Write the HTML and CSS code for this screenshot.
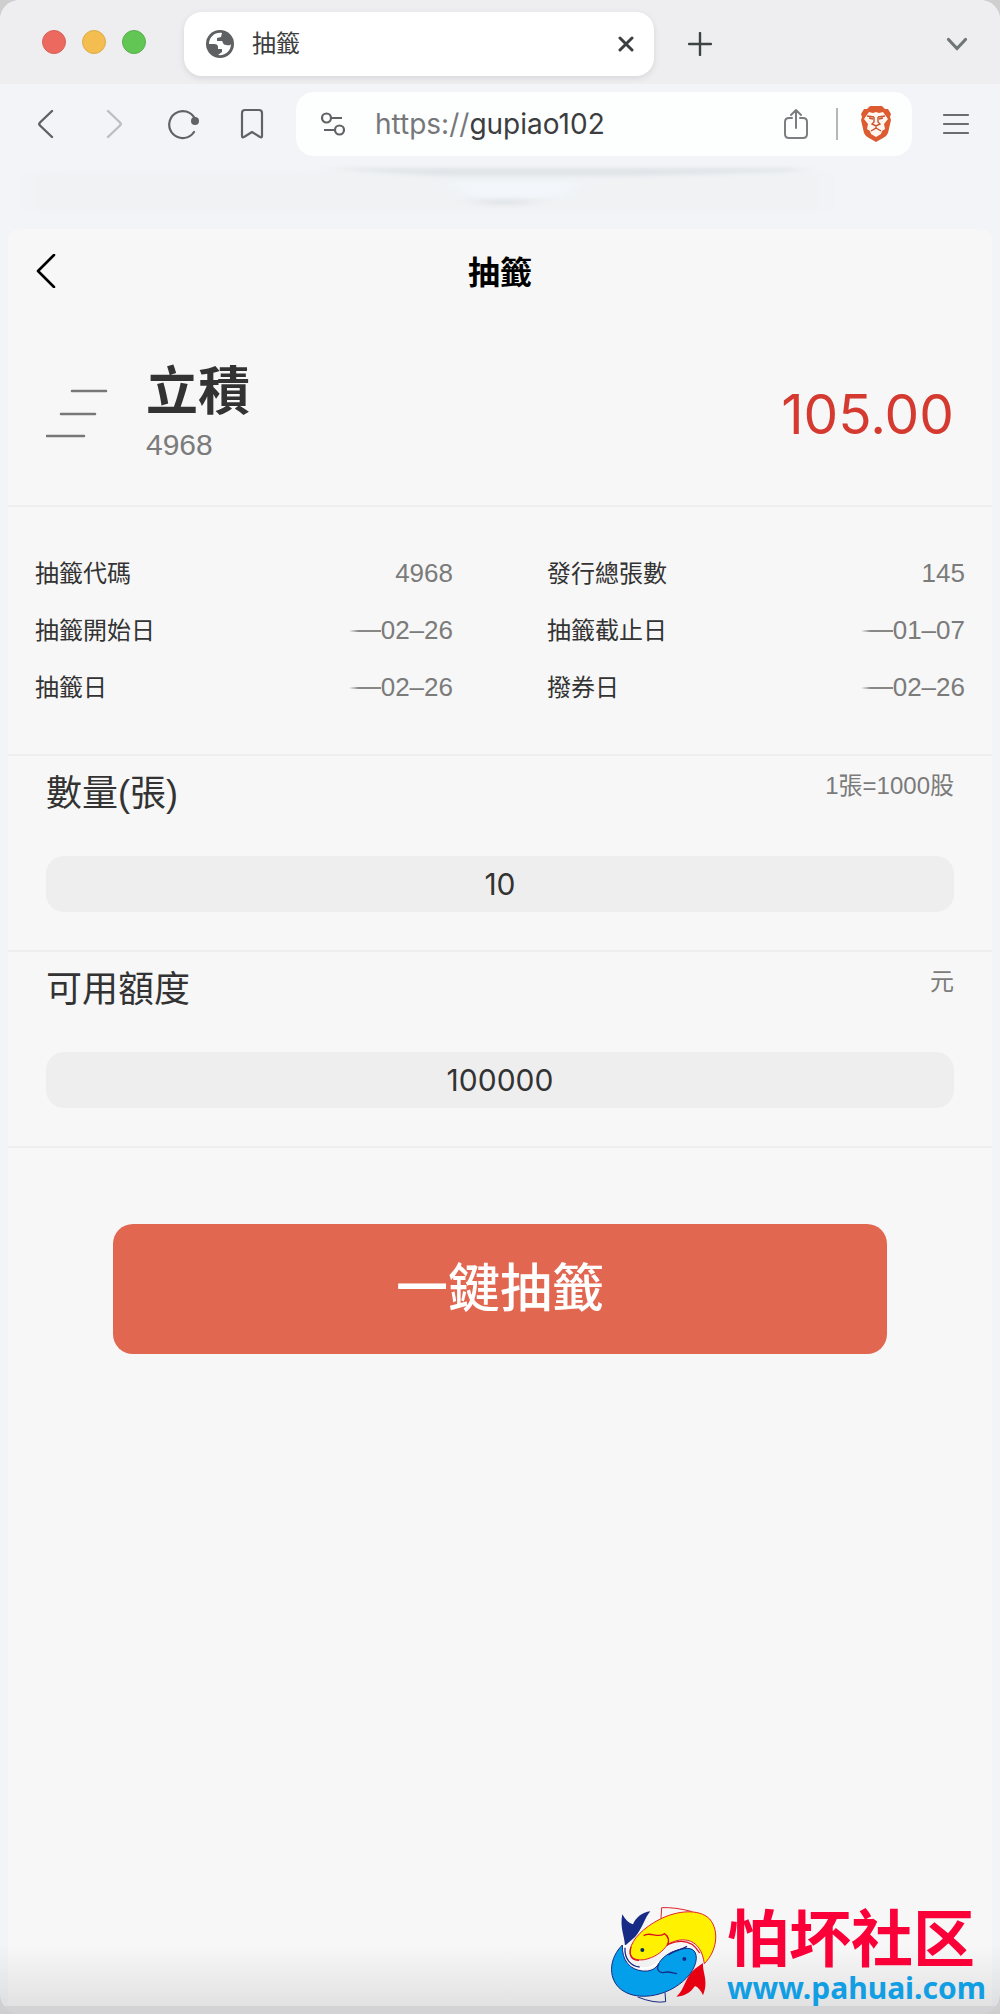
FILE: index.html
```html
<!DOCTYPE html>
<html lang="zh-Hant">
<head>
  <meta charset="UTF-8" />
  <meta name="viewport" content="width=device-width, initial-scale=1.0">
  <title>抽籤</title>
  <link rel="stylesheet" href="styles.css">
</head>
<body>

  <div class="window">

    <div class="tab-strip">
      <div class="lights">
        <span class="light red"></span>
        <span class="light yellow"></span>
        <span class="light green"></span>
      </div>
      <div class="tab">
        <svg width="28" height="28" viewBox="0 0 28 28">
          <circle cx="14" cy="14" r="14" fill="#5f6063"/>
          <path d="M16 3C9 2 3 7 3 14h5q4 0 4 3v2h4v3l-4 3c7 1 13-4 13-11-1 2-3 1-5 1-3 0-3-3-4-4l-5 0v-3l4-1z" fill="#fff"/>
        </svg>
        <span class="tab-title">抽籤</span>
        <button class="icon-btn tab-close" aria-label="關閉">
          <svg width="16" height="16" viewBox="0 0 16 16" fill="none" stroke="#3c3e40" stroke-width="3" stroke-linecap="round"><path d="M2 2l12 12M14 2L2 14"/></svg>
        </button>
      </div>
      <button class="icon-btn" aria-label="新分頁">
        <svg width="24" height="24" viewBox="0 0 24 24" fill="none" stroke="#3f4244" stroke-width="2.4" stroke-linecap="round"><path d="M12 1v22M1 12h22"/></svg>
      </button>
      <button class="icon-btn tab-list" aria-label="分頁清單">
        <svg width="22" height="14" viewBox="0 0 22 14" fill="none" stroke="#707577" stroke-width="3.2" stroke-linecap="round"><path d="M2.5 2.5L11 11.5l8.500-9"/></svg>
      </button>
    </div>

    <div class="toolbar">
      <div class="nav">
        <button class="icon-btn" aria-label="返回">
          <svg width="28" height="28" viewBox="0 0 28 28" fill="none" stroke="#5f6264" stroke-width="2.4" stroke-linecap="round" stroke-linejoin="round"><path d="M20 1L8 12.500q-1.500 1.500 0 3L20 27"/></svg>
        </button>
        <button class="icon-btn" aria-label="前進">
          <svg width="28" height="28" viewBox="0 0 28 28" fill="none" stroke="#bcbec1" stroke-width="2.400" stroke-linecap="round" stroke-linejoin="round"><path d="M8 1l12 11.500q1.500 1.500 0 3L8 27"/></svg>
        </button>
        <button class="icon-btn" aria-label="重新載入">
          <svg width="32" height="32" viewBox="0 0 32 32" fill="none" stroke="#606365" stroke-width="2.200" stroke-linecap="round"><path d="M27 11A13.500 13.500 0 1 0 26 24"/><circle cx="27" cy="13" r="4" fill="#606365" stroke="none"/></svg>
        </button>
        <button class="icon-btn" aria-label="書籤">
          <svg width="24" height="32" viewBox="0 0 24 32" fill="none" stroke="#606365" stroke-width="2.200" stroke-linejoin="round"><path d="M5 2h14q3 0 3 3v23q0 2-2 1l-8-5-8 5q-2 1-2-1V5q0-3 3-3z"/></svg>
        </button>
      </div>
      <div class="address">
        <svg width="26" height="24" viewBox="0 0 26 24" fill="none" stroke="#606365" stroke-width="2.200"><circle cx="6.500" cy="6" r="4.500"/><path d="M11 6h11M4 18h11"/><circle cx="19.500" cy="18" r="4.500"/></svg>
        <label class="scheme" for="url">https://</label>
        <input class="url" id="url" type="text" value="gupiao102">
        <button class="icon-btn" aria-label="分享">
          <svg width="24" height="32" viewBox="0 0 24 32" fill="none" stroke="#7b7e80" stroke-width="2" stroke-linecap="round" stroke-linejoin="round"><path d="M8 10H5q-4 0-4 4v12q0 4 4 4h14q4 0 4-4V14q0-4-4-4h-3M12 20V2M7 7l5-5 5 5"/></svg>
        </button>
        <span class="divider"></span>
        <button class="icon-btn" aria-label="Brave">
          <svg width="32" height="36" viewBox="0 0 32 36">
            <path d="M10 0h12l3 3h3l3 5-1 3 1 3-3 13q-1 3-5 5l-7 4-7-4q-4-2-5-5L1 14l1-3-1-3 3-5h3z" fill="#dc5b30"/>
            <path d="M9 6l4 1 3-1 3 1 4-1 5 7-4 5 1 5-3 2-1 3-5 3-5-3-1-3-3-2 1-5-4-5z" fill="#fff6f0"/>
            <path d="M7 10l7 1M25 10l-7 1M9 12l4 1M23 12l-4 1M14 11v5l-2 2 4 2 4-2-2-2v-5M16 20v2l-5 3M16 22l5 3" fill="none" stroke="#c9532d" stroke-width="1.400"/>
          </svg>
        </button>
      </div>
      <button class="icon-btn menu" aria-label="選單">
        <svg width="28" height="22" viewBox="0 0 28 22" fill="none" stroke="#696d6f" stroke-width="2.200" stroke-linecap="round"><path d="M2 2h24M2 11h24M2 20h24"/></svg>
      </button>
    </div>

    <div class="smudge">
      <svg width="100%" height="100%" viewBox="0 0 1000 66" preserveAspectRatio="none">
        <defs>
          <filter id="soft" x="-10%" y="-50%" width="120%" height="200%"><feGaussianBlur stdDeviation="12 2"/></filter>
        </defs>
        <g filter="url(#soft)">
          <rect x="30" y="8" width="795" height="40" fill="#f0f2f4"/>
          <path d="M320 4h480v3l-160 5H440z" fill="#dfe4e7"/>
          <path d="M450 18h130l-20 16H470z" fill="#f3f7fb"/>
          <path d="M470 36h70l-20 6h-30z" fill="#e0e3e7"/>
        </g>
      </svg>
    </div>

    <main class="page">
      <header class="page-head">
        <button class="icon-btn" aria-label="返回">
          <svg width="20" height="34" viewBox="0 0 20 34" fill="none" stroke="#000" stroke-width="2.600" stroke-linecap="round" stroke-linejoin="round"><path d="M18 1L2 17l16 16"/></svg>
        </button>
        <h1>抽籤</h1>
      </header>

      <section class="stock">
        <svg width="62" height="50" viewBox="0 0 62 50" fill="none" stroke="#777" stroke-width="2.600" stroke-linecap="round"><path d="M26 2h34M15 25h34M1 47h37"/></svg>
        <div class="stock-name">
          <h2>立積</h2>
          <p>4968</p>
        </div>
        <strong class="price">105.00</strong>
      </section>

      <dl class="details">
        <div><dt>抽籤代碼</dt><dd>4968</dd></div>
        <div><dt>發行總張數</dt><dd>145</dd></div>
        <div><dt>抽籤開始日</dt><dd><i class="strike"></i>02–26</dd></div>
        <div><dt>抽籤截止日</dt><dd><i class="strike"></i>01–07</dd></div>
        <div><dt>抽籤日</dt><dd><i class="strike"></i>02–26</dd></div>
        <div><dt>撥券日</dt><dd><i class="strike"></i>02–26</dd></div>
      </dl>

      <section class="field">
        <div class="field-head">
          <label for="amount">數量(張)</label>
          <span>1張=1000股</span>
        </div>
        <input id="amount" type="text" value="10">
      </section>

      <section class="field">
        <div class="field-head">
          <label for="quota">可用額度</label>
          <span>元</span>
        </div>
        <input id="quota" type="text" value="100000">
      </section>

      <button class="submit">一鍵抽籤</button>
    </main>

    <div class="watermark">
      <svg width="120" height="119" viewBox="0 0 360 357">
        <!-- tails -->
        <path d="M66 152C64 120 50 98 58 58q14 26 32 30C98 68 118 52 142 49 126 66 118 102 96 126q-14 12-30 26z" fill="#172a85"/>
        <path d="M300 204c-2 30 18 54 0 97-6-14-14-24-24-28-14 20-30 30-56 32 26-22 26-60 56-84z" fill="#e60012"/>
        <!-- fins -->
        <path d="M174 70l2-32q40-2 92 12" fill="none" stroke="#e2222b" stroke-width="3"/>
        <path d="M104 306q50 20 84 14l-2-28" fill="none" stroke="#172a85" stroke-width="3"/>
        <!-- yellow fish -->
        <path d="M304 206C342 168 350 108 320 72 288 40 222 46 168 74 122 98 88 132 82 162c-4 26 14 36 42 32 30-6 54-22 70-46 46-26 100-18 110 58z" fill="#fff100" stroke="#e2222b" stroke-width="3"/>
        <!-- blue fish -->
        <path d="M58 150C20 188 14 244 48 278c36 34 104 34 162 2 42-24 68-58 70-90 0-26-16-34-44-28-30 6-54 20-68 42-10 20-28 26-50 24-36-4-62-30-60-78z" fill="#049fea" stroke="#172a85" stroke-width="3"/>
        <path d="M66 150c-4 40 18 66 50 70 22 2 38-6 50-20" fill="none" stroke="#fff" stroke-width="7"/>
        <path d="M66 158c-2 34 18 56 44 58M168 206c-10 16 0 30 16 26 16-4 24 2 38 4M196 180c20-16 36-14 56-26" fill="none" stroke="#172a85" stroke-width="4"/>
        <path d="M122 122c20-14 42 10 62-6 14 8 16 24 8 36M192 150c40-18 76-14 98 24M84 156c-8 26 2 40 24 40" fill="none" stroke="#d9121e" stroke-width="4"/>
        <circle cx="118" cy="165" r="6" fill="#072c56"/>
        <circle cx="244" cy="192" r="6" fill="#172a85"/>
      </svg>
      <div class="brand">
        <span class="brand-name" lang="zh-Hans">怕坏社区</span>
        <a href="#">www.pahuai.com</a>
      </div>
    </div>

  </div>

</body>
</html>
```
FILE: styles.css
```css
* {
  box-sizing: border-box;
}

html, body {
  margin: 0;
  padding: 0;
  background: #cfcfd0;
  color: #333;
  font-family: 'Liberation Sans', 'Noto Sans CJK TC', sans-serif;
}

h1, h2, p, dl, dd {
  margin: 0;
}

button, input {
  border: 0;
  padding: 0;
  background: none;
  color: inherit;
  font-family: inherit;
}

.window {
  position: relative;
  display: flex;
  flex-direction: column;
  min-height: 100vh;
  padding-bottom: 8px;
  background: linear-gradient(to top, #d3d3d5 8px, #dedfe1 8px, #f3f4f7 70px);
  border-radius: 20px;
  overflow: hidden;
}

.icon-btn {
  display: flex;
  align-items: center;
  justify-content: center;
  flex: none;
}

/* tabs */
.tab-strip {
  display: flex;
  align-items: center;
  height: 84px;
  padding: 4px 32px 0 42px;
  background: #eeeef0;
}

.lights {
  display: flex;
  gap: 16px;
  width: 142px;
  padding-bottom: 4px;
}

.light {
  width: 24px;
  height: 24px;
  border-radius: 50%;
}

.red { background: #ec695f; border: 1px solid #d95f57; }
.yellow { background: #f3be4f; border: 1px solid #d9ab4a; }
.green { background: #62c654; border: 1px solid #58ae4c; }

.tab {
  display: flex;
  align-items: center;
  flex: 0 1 470px;
  height: 64px;
  margin-right: 34px;
  padding: 0 20px 0 22px;
  background: #fff;
  border-radius: 18px;
  box-shadow: 0 2px 6px rgba(0, 0, 0, 0.1);
}

.tab-title {
  margin-left: 18px;
  font-size: 24px;
  line-height: 32px;
  color: #3d3e40;
}

.tab-close,
.tab-list {
  margin-left: auto;
}

/* address bar */
.toolbar {
  display: flex;
  align-items: center;
  height: 80px;
  padding: 0 30px 0 32px;
  background: #f3f4f7;
}

.nav {
  display: flex;
  align-items: center;
  flex: none;
  gap: 40px;
  width: 264px;
}

.address {
  display: flex;
  align-items: center;
  flex: 1;
  min-width: 0;
  height: 64px;
  padding: 0 20px 0 24px;
  background: #fdfffe;
  border-radius: 18px;
}

.scheme,
.url {
  font-family: Inter, sans-serif;
  font-size: 28px;
}

.scheme {
  margin-left: 29px;
  color: #76777a;
}

.url {
  flex: 1;
  min-width: 0;
  color: #3c3d40;
}

.divider {
  width: 2px;
  height: 32px;
  margin: 0 22px 0 28px;
  background: #b5b7b9;
}

.menu {
  margin-left: 30px;
}

.smudge {
  height: 65px;
}

/* page */
.page {
  flex: 1;
  margin: 0 8px;
  background: linear-gradient(to top, #e2e2e3, #f7f7f7 60px);
  border-radius: 12px 12px 0 0;
}

.page-head {
  display: grid;
  grid-template-columns: 62px 1fr 62px;
  align-items: center;
  height: 84px;
  padding: 0 7px;
}

.page-head h1 {
  padding-top: 4px;
  font-size: 32px;
  line-height: 40px;
  text-align: center;
  color: #000;
}

.stock {
  display: flex;
  align-items: center;
  height: 194px;
  padding: 10px 38px 0;
  border-bottom: 2px solid #eeeeef;
}

.stock-name {
  margin: 0 auto 0 38px;
}

.stock-name h2 {
  font-size: 52px;
  line-height: 62px;
}

.stock-name p {
  font-size: 30px;
  line-height: 44px;
  color: #7b7b7b;
}

.price {
  font-family: Inter, sans-serif;
  font-size: 55px;
  font-weight: 400;
  color: #d43a30;
}

.details {
  display: grid;
  grid-template-columns: 1fr 1fr;
  column-gap: 94px;
  padding: 38px 27px;
  border-bottom: 2px solid #eeeeef;
}

.details div {
  display: flex;
  align-items: center;
  justify-content: space-between;
  height: 57px;
}

.details dt {
  font-size: 24px;
  line-height: 32px;
}

.details dd {
  display: flex;
  align-items: center;
  font-size: 26px;
  color: #7b7b7b;
}

.strike {
  width: 32px;
  height: 2px;
  background: linear-gradient(to right, transparent, #888 30%);
}

.field {
  height: 196px;
  padding: 12px 38px 38px;
  border-bottom: 2px solid #eeeeef;
}

.field-head {
  display: flex;
  justify-content: space-between;
}

.field-head label {
  font-size: 36px;
  line-height: 52px;
}

.field-head span {
  font-size: 24px;
  line-height: 36px;
  color: #7b7b7b;
}

.field input {
  display: block;
  width: 100%;
  height: 56px;
  margin-top: 36px;
  background: #eee;
  border-radius: 18px;
  font-family: Inter, sans-serif;
  font-size: 30px;
  text-align: center;
}

.submit {
  display: block;
  width: calc(100% - 210px);
  height: 130px;
  margin: 76px auto 0;
  background: #e26751;
  border-radius: 20px;
  color: #fff;
  font-size: 52px;
  font-weight: 500;
  line-height: 62px;
}

/* watermark */
.watermark {
  position: absolute;
  right: 14px;
  bottom: 0;
  display: flex;
  align-items: center;
}

.brand {
  display: flex;
  flex-direction: column;
  margin-left: 4px;
}

.brand-name {
  font-family: 'Noto Sans CJK SC', sans-serif;
  font-size: 62px;
  font-weight: 700;
  line-height: 66px;
  color: #fb0038;
}

.brand a {
  font-family: 'Noto Sans', sans-serif;
  font-size: 30px;
  font-weight: 700;
  line-height: 40px;
  color: #129ee3;
  text-decoration: none;
}
```
